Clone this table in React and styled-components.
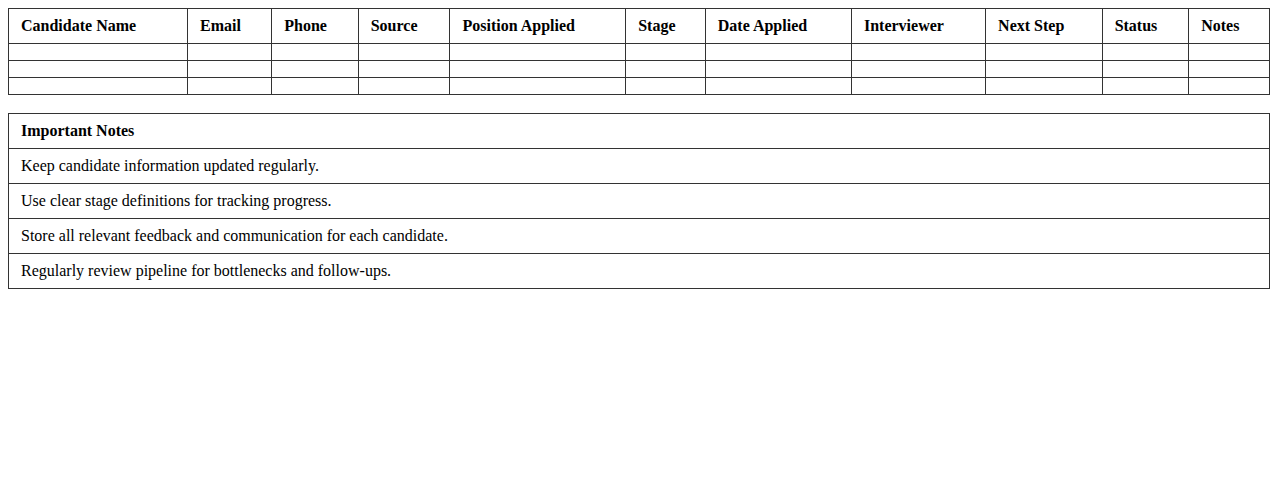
import React from 'react'
import styled, { createGlobalStyle } from 'styled-components'

const GlobalStyle = createGlobalStyle`
    body {
        margin: 8px;
        background: #fff;
        font-family: "Liberation Serif", "Times New Roman", serif;
        font-size: 16px;
        color: #000;
    }
`

const Table = styled.table`
    width: 100%;
    border-collapse: collapse;
    margin-bottom: 18px;
`

const HeadCell = styled.th`
    border: 1px solid #333;
    padding: 8px 12px;
    text-align: left;
    font-weight: bold;
`

const Cell = styled.td`
    border: 1px solid #333;
    padding: 8px 12px;
    text-align: left;
`

const columns = [
    'Candidate Name',
    'Email',
    'Phone',
    'Source',
    'Position Applied',
    'Stage',
    'Date Applied',
    'Interviewer',
    'Next Step',
    'Status',
    'Notes',
]

const notes = [
    'Keep candidate information updated regularly.',
    'Use clear stage definitions for tracking progress.',
    'Store all relevant feedback and communication for each candidate.',
    'Regularly review pipeline for bottlenecks and follow-ups.',
]

const App = () => (
    <>
        <GlobalStyle />
        <Table>
            <thead>
                <tr>
                    {columns.map(c => <HeadCell key={c}>{c}</HeadCell>)}
                </tr>
            </thead>
            <tbody>
                {[0, 1, 2].map(r => (
                    <tr key={r}>
                        {columns.map(c => <Cell key={c} />)}
                    </tr>
                ))}
            </tbody>
        </Table>
        <Table>
            <thead>
                <tr>
                    <HeadCell>Important Notes</HeadCell>
                </tr>
            </thead>
            <tbody>
                {notes.map(n => (
                    <tr key={n}>
                        <Cell>{n}</Cell>
                    </tr>
                ))}
            </tbody>
        </Table>
    </>
)

export default App
